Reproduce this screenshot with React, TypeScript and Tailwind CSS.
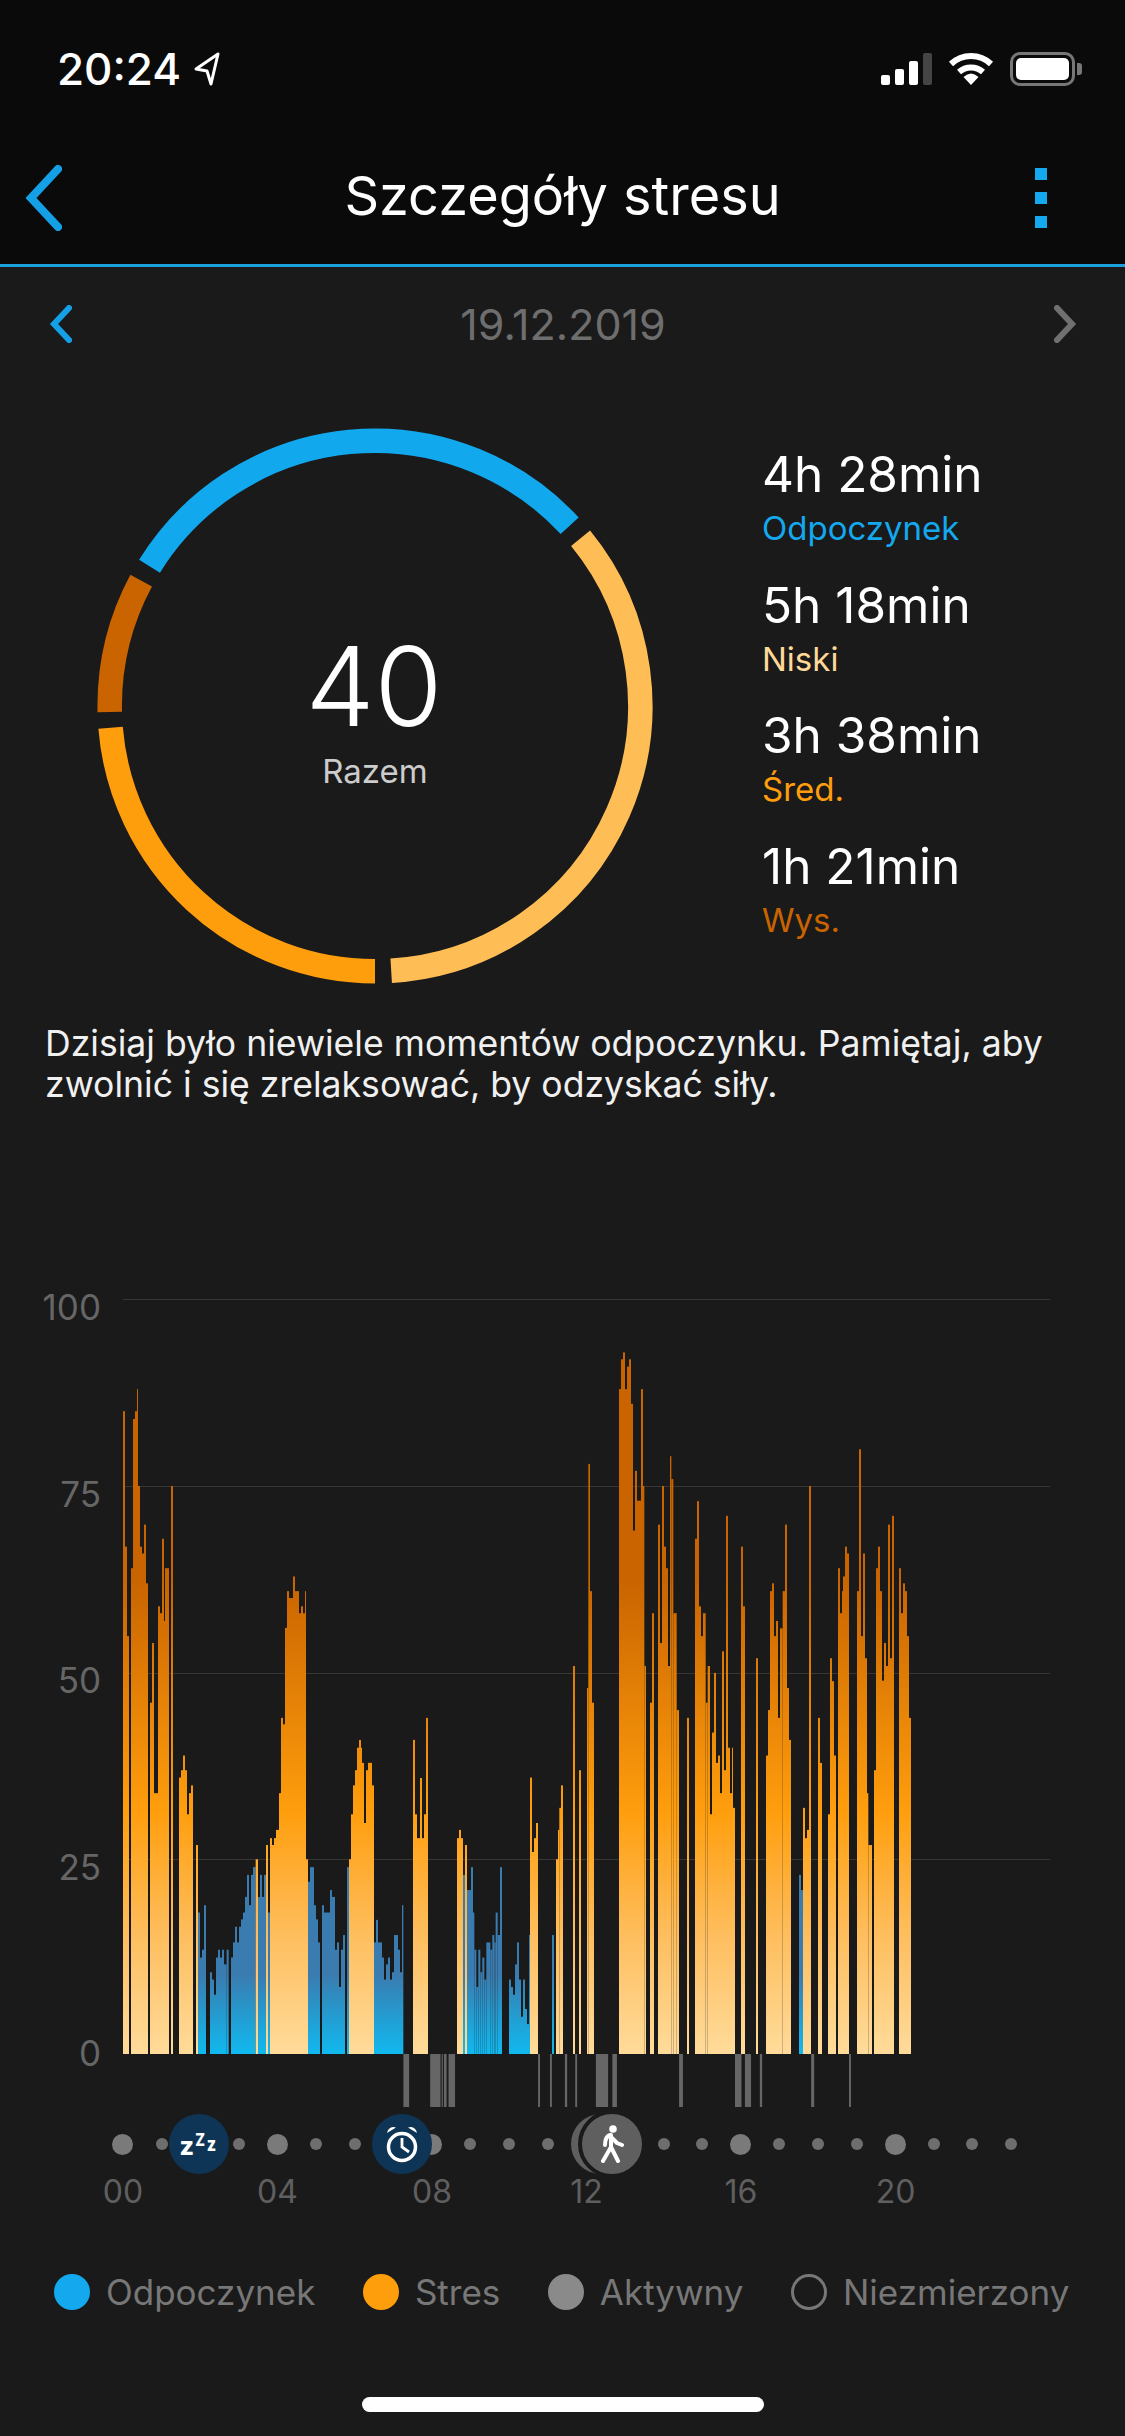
import React from "react";

const font = { fontFamily: '"Inter", "Liberation Sans", sans-serif' };

// Bars are transcribed as [end x, top y] in a 3x / 2.178x sampling of the picture.
// top 0 = gap; negative top = rest (blue).
const left: [number, number][] = [
  [69,0],[75,155],[81,450],[87,645],[93,0],[99,497],[105,172],[111,155],[114,107],[120,318],[126,450],[132,465],[138,402],[144,530],[150,0],
  [156,790],[162,660],[174,987],[180,580],[186,595],[192,433],[195,612],[207,497],[213,0],[219,318],[237,0],
  [243,953],[249,937],[255,905],[261,937],[267,1033],[273,987],[279,970],[288,0],[294,1100],
  [300,-1247],[306,-1345],[312,-1328],[318,-1231],[330,0],[336,-1377],[342,-1393],[348,-1426],[354,-1345],[360,-1328],[366,-1345],[372,-1328],[380,-1360],[386,-1328],[393,0],
  [399,-1345],[405,-1312],[411,-1278],[417,-1312],[423,-1278],[429,-1262],[435,-1247],[441,-1213],[447,-1165],[453,-1231],[459,-1165],[467,-1148],[474,1131],[480,-1213],[486,-1165],[492,-1213],[498,-1165],[504,1100],[510,-1247],
  [516,1085],[522,1100],[528,1085],[537,1067],[543,987],[549,823],[555,837],[561,627],[567,547],[579,562],[585,515],[597,547],[603,595],[609,580],[615,595],[618,547],[624,1131],
  [630,-1180],[642,-1148],[648,-1231],[654,-1262],[660,-1312],[666,0],[672,-1231],[690,-1247],[696,-1198],[705,-1213],[711,-1328],[717,-1312],[723,-1409],[729,-1328],[735,-1296],[741,0],[747,-1148],
  [753,1131],[759,1033],[765,970],[771,937],[777,888],[783,871],[786,888],[792,921],[798,1052],[804,937],[816,921],[822,970],
  [828,-1312],[834,-1263],[846,-1312],[852,-1345],[858,-1393],[864,-1360],[870,-1345],[876,-1393],[882,-1377],[894,-1296],[900,-1328],[906,-1377],[910,-1231],[939,0],
  [945,871],[951,1033],[960,1085],[966,954],[972,1085],[978,1033],[984,823],[1071,0],
  [1077,1085],[1083,1067],[1089,1085],[1095,-1165],[1101,1100],[1113,-1198],[1119,-1148],[1123,-1247],[1129,-1328],[1135,-1409],[1141,-1328],[1147,-1377],[1153,-1345],[1159,-1393],[1171,-1312],[1177,-1328],[1183,-1296],[1187,-1312],[1193,-1247],[1200,-1296],
];
const right: [number, number][] = [
  [0,0],[6,-1148],[27,0],[33,-1393],[39,-1409],[45,-1426],[51,-1360],[57,-1312],[63,-1393],[69,-1474],[75,-1393],[81,-1457],[87,-1490],[90,-1296],
  [96,953],[102,1115],[108,1085],[114,1052],[156,0],[162,-1296],[168,0],[174,1131],[178,1067],[183,1019],[189,970],[219,0],[225,710],[237,0],[243,937],[261,0],
  [265,758],[270,270],[276,547],[282,790],[357,0],
  [363,107],[369,42],[375,27],[381,107],[387,58],[393,42],[399,139],[405,415],[411,285],[423,350],[429,107],[433,318],[438,710],[450,0],
  [456,790],[462,595],[474,0],[480,402],[486,660],[492,318],[498,450],[504,497],[510,710],[514,253],[520,303],[530,595],[537,806],[561,0],[567,823],[585,0],
  [591,433],[597,351],[603,580],[609,645],[617,595],[623,790],[630,710],[636,1033],[642,855],[648,725],[654,921],[660,905],[666,987],[672,678],[678,937],[684,383],[690,888],[696,987],[699,888],[705,1019],[723,0],
  [729,450],[735,580],[768,0],[774,693],[798,0],
  [804,905],[810,806],[816,547],[822,530],[828,645],[834,612],[840,823],[848,628],[855,547],[861,402],[867,758],[873,871],[897,0],
  [903,-1165],[909,-1198],[915,1019],[921,1085],[927,1067],[933,318],[954,0],[960,823],[966,921],[984,0],
  [990,1033],[996,693],[1002,743],[1008,905],[1014,0],[1020,497],[1026,595],[1029,547],[1035,515],[1041,450],[1047,465],[1071,0],
  [1077,547],[1083,238],[1089,645],[1095,465],[1101,693],[1105,987],[1116,1100],[1122,0],
  [1128,937],[1134,497],[1140,450],[1146,547],[1152,742],[1158,660],[1164,710],[1170,402],[1176,693],[1182,383],[1197,0],
  [1203,497],[1209,595],[1215,530],[1221,547],[1227,645],[1233,823],
];

const BASE = 2054;
function toRects(data: [number, number][], origin: number) {
  const out: { x: number; w: number; y: number; blue: boolean }[] = [];
  let prev = data[0][0];
  for (const [end, top] of data) {
    if (top !== 0 && end > prev) {
      out.push({ x: origin + prev / 3, w: (end - prev) / 3, y: 1340 + Math.abs(top) / 2.178, blue: top < 0 });
    }
    prev = end;
  }
  return out;
}
const bars = [...toRects(left, 100), ...toRects(right, 500)];

const act5 = [[845,860],[915,942],[945,948],[951,958],[963,980],[1197,1202],[1228,1233],[1267,1273],[1294,1299],[1348,1380],[1391,1403]].map(([a,b]) => [80 + a / 2.613, 80 + b / 2.613]);
const act6 = [[468,478],[614,631],[640,656],[679,685],[813,821],[912,917]].map(([a,b]) => [500 + a / 2.613, 500 + b / 2.613]);
const activity = [...act5, ...act6];

function arc(a0: number, a1: number) {
  const r = 265.3, cx = 278, cy = 278;
  const p = (a: number) => {
    const t = (a * Math.PI) / 180;
    return `${cx + r * Math.sin(t)} ${cy - r * Math.cos(t)}`;
  };
  return `M${p(a0)} A${r} ${r} 0 ${a1 - a0 > 180 ? 1 : 0} 1 ${p(a1)}`;
}

const stats = [
  ["4h 28min", "Odpoczynek", "text-[#14a8ee]"],
  ["5h 18min", "Niski", "text-[#ffd998]"],
  ["3h 38min", "Śred.", "text-[#ff9e0d]"],
  ["1h 21min", "Wys.", "text-[#c96400]"],
];

function Chevron({ dir, className, w, h, sw }: { dir: "l" | "r"; className: string; w: number; h: number; sw: number }) {
  const pts = dir === "l" ? `${w - sw / 2},${sw / 2} ${sw},${h / 2} ${w - sw / 2},${h - sw / 2}` : `${sw / 2},${sw / 2} ${w - sw},${h / 2} ${sw / 2},${h - sw / 2}`;
  return (
    <svg width={w} height={h} viewBox={`0 0 ${w} ${h}`} className={className}>
      <polyline points={pts} fill="none" stroke="currentColor" strokeWidth={sw} strokeLinecap="round" strokeLinejoin="miter" />
    </svg>
  );
}

function Dot({ big }: { big: boolean }) {
  return <div className={big ? "w-[21px] h-[21px] rounded-full bg-[#7a7a7a]" : "w-[12px] h-[12px] rounded-full bg-[#6e6e6e]"} />;
}

export default function App() {
  return (
    <div className="w-[1125px] min-h-[2436px] bg-[#1a1a1a] text-white overflow-hidden" style={font}>
      <header className="bg-[#0a0a0a] h-[267px] border-b-[3px] border-[#1ba1dd]">
        <div className="h-[138px] flex items-center justify-between pl-[57px] pr-[43px]">
          <div className="flex items-center gap-[10px]">
            <span className="text-[44px] font-medium leading-none">20:24</span>
            <svg width="30" height="34" viewBox="0 0 30 34">
              <path d="M27 2 L5 17 L16 19 L20 32 Z" fill="none" stroke="white" strokeWidth="3" strokeLinejoin="round" />
            </svg>
          </div>
          <div className="flex items-center">
            <div className="flex items-end gap-[5px] h-[32px] mr-[16px]">
              <div className="w-[9px] h-[10px] rounded-[2px] bg-white" />
              <div className="w-[9px] h-[16px] rounded-[2px] bg-white" />
              <div className="w-[9px] h-[24px] rounded-[2px] bg-white" />
              <div className="w-[9px] h-[32px] rounded-[2px] bg-[#444444]" />
            </div>
            <svg width="46" height="34" viewBox="0 0 46 34" className="mr-[16px]">
              <path d="M3 12 A29 29 0 0 1 43 12" fill="none" stroke="white" strokeWidth="6" />
              <path d="M11 20 A18 18 0 0 1 35 20" fill="none" stroke="white" strokeWidth="6" />
              <path d="M15.5 25 Q23 18 30.5 25 L23 33 Z" fill="white" />
            </svg>
            <div className="flex items-center gap-[2px]">
              <div className="w-[65px] h-[34px] rounded-[10px] border-[3px] border-[#777777] p-[3px]">
                <div className="w-full h-full rounded-[5px] bg-white" />
              </div>
              <div className="w-[5px] h-[12px] rounded-r-[3px] bg-[#777777]" />
            </div>
          </div>
        </div>
        <div className="h-[120px] relative flex items-center justify-center pb-[5px]">
          <span className="text-[54px] leading-none">Szczegóły stresu</span>
          <Chevron dir="l" w={39} h={66} sw={8} className="absolute left-[23px] top-[27px] text-[#14a0e6]" />
          <div className="absolute left-[1035px] top-[30px] flex flex-col gap-[12px]">
            <div className="w-[12px] h-[12px] bg-[#14a8ee]" />
            <div className="w-[12px] h-[12px] bg-[#14a8ee]" />
            <div className="w-[12px] h-[12px] bg-[#14a8ee]" />
          </div>
        </div>
      </header>

      <div className="h-[114px] flex items-center justify-between pl-[48px] pr-[47px]">
        <Chevron dir="l" w={24} h={38} sw={6} className="text-[#14a0e6]" />
        <span className="text-[43px] leading-none text-[#6e6e6e]">19.12.2019</span>
        <Chevron dir="r" w={24} h={38} sw={6} className="text-[#707070]" />
      </div>

      <section className="flex mt-[47px] pl-[97px]">
        <div className="relative w-[556px] h-[556px] flex flex-col items-center justify-center">
          <svg width="556" height="556" viewBox="0 0 556 556" className="absolute inset-0">
            <g fill="none" strokeWidth="24.5">
              <path d={arc(-58.2, 47.2)} stroke="#12a8ee" />
              <path d={arc(50.8, 176.5)} stroke="#ffbe55" />
              <path d={arc(180, 265.3)} stroke="#ff9e0d" />
              <path d={arc(268.7, 298.2)} stroke="#c96400" />
            </g>
          </svg>
          <span className="text-[110px] font-light leading-none mt-[6px] ml-[-2px]">40</span>
          <span className="text-[33px] leading-none mt-[14px] text-[#cccccc]">Razem</span>
        </div>
        <div className="ml-[109px] pt-[20px] flex flex-col">
          {stats.map(([t, l, c]) => (
            <div key={l} className="h-[130.6px]">
              <div className="text-[49.5px] leading-[52px]">{t}</div>
              <div className={`text-[33px] leading-[36px] mt-[10px] ${c}`}>{l}</div>
            </div>
          ))}
        </div>
      </section>

      <p className="mt-[39px] pl-[45px] text-[35.6px] leading-[41px] text-[#f0f0f0] whitespace-nowrap">
        Dzisiaj było niewiele momentów odpoczynku. Pamiętaj, aby
        <br />
        zwolnić i się zrelaksować, by odzyskać siły.
      </p>

      <section className="mt-[182px] flex">
        <div className="w-[101px] shrink-0 flex flex-col items-end gap-[146.6px] text-[35px] leading-[40px] text-[#666666]">
          <span>100</span>
          <span>75</span>
          <span>50</span>
          <span>25</span>
          <span>0</span>
        </div>
        <svg width="930" height="820" viewBox="123 1287 930 820" className="ml-[22px] shrink-0 block">
          <defs>
            <linearGradient id="o" gradientUnits="userSpaceOnUse" x1="0" y1="1580" x2="0" y2="2054">
              <stop offset="0" stopColor="#c96400" />
              <stop offset="0.49" stopColor="#ff9e0d" />
              <stop offset="0.75" stopColor="#febe5e" />
              <stop offset="1" stopColor="#ffdb9a" />
            </linearGradient>
            <linearGradient id="b" gradientUnits="userSpaceOnUse" x1="0" y1="1975" x2="0" y2="2054">
              <stop offset="0" stopColor="#3a7cb0" />
              <stop offset="1" stopColor="#10b9ef" />
            </linearGradient>
          </defs>
          {[1299, 1486, 1673, 1859].map((y) => (
            <rect key={y} x="123" y={y} width="927" height="1" fill="#363636" />
          ))}
          {bars.map((b, i) => (
            <rect key={i} x={b.x} y={b.y} width={b.w} height={BASE - b.y} fill={b.blue ? "url(#b)" : "url(#o)"} />
          ))}
          {activity.map(([a, c], i) => (
            <rect key={i} x={a} y={BASE} width={c - a} height={53} fill="#666666" />
          ))}
        </svg>
      </section>

      <div className="relative h-[60px] mt-[7px] pl-[103.7px] flex items-center">
        {Array.from({ length: 24 }).map((_, i) => (
          <div key={i} className="w-[38.62px] flex items-center justify-center">
            <Dot big={i % 4 === 0} />
          </div>
        ))}
        <div className="absolute left-[168.5px] top-0 w-[60px] h-[60px] rounded-full bg-[#0e3556] flex items-center justify-center font-extrabold leading-none">
          <span className="text-[25px] translate-y-[2px]">z</span>
          <span className="text-[18px] translate-y-[-4px] scale-x-[0.8]">Z</span>
          <span className="text-[19px] scale-x-[0.85]">z</span>
        </div>
        <div className="absolute left-[371.5px] top-0 w-[60px] h-[60px] rounded-full bg-[#0e3556] flex items-center justify-center">
          <svg width="34" height="38" viewBox="0 0 34 38">
            <circle cx="17" cy="22" r="13.5" fill="none" stroke="white" strokeWidth="3.5" />
            <path d="M17 13 V22 L24 27" fill="none" stroke="white" strokeWidth="2.8" />
            <path d="M2 8 A6.5 6.5 0 0 1 11 2.5 Z" fill="white" />
            <path d="M32 8 A6.5 6.5 0 0 0 23 2.5 Z" fill="white" />
          </svg>
        </div>
        <div className="absolute left-[571px] top-0 w-[60px] h-[60px] rounded-full bg-[#5f5f5f]" />
        <div className="absolute left-[578px] top-[-4px] w-[68px] h-[68px] rounded-full bg-[#5f5f5f] border-[4px] border-[#1a1a1a] flex items-center justify-center">
          <svg width="24" height="38" viewBox="0 0 24 38">
            <circle cx="13" cy="4" r="3.8" fill="white" />
            <path d="M10 10 C7 11 5 14 5 20 M11 10 L11 22 L18 36 M11 22 L3 36 M12 13 L17 18 L22 20" fill="none" stroke="white" strokeWidth="4" strokeLinecap="round" strokeLinejoin="round" />
          </svg>
        </div>
      </div>

      <div className="flex pl-[45.75px] h-[36px] items-center text-[32px] leading-none text-[#5f5f5f]">
        {["00", "04", "08", "12", "16", "20"].map((h) => (
          <div key={h} className="w-[154.5px] text-center">{h}</div>
        ))}
      </div>

      <div className="mt-[62px] pl-[54px] h-[40px] flex items-center gap-[47.5px] text-[35px] leading-none text-[#777777]">
        <div className="flex items-center gap-[16px]">
          <div className="w-[36px] h-[36px] rounded-full bg-[#14a8ee]" />
          <span>Odpoczynek</span>
        </div>
        <div className="flex items-center gap-[16px]">
          <div className="w-[36px] h-[36px] rounded-full bg-[#ff9e0d]" />
          <span>Stres</span>
        </div>
        <div className="flex items-center gap-[16px]">
          <div className="w-[36px] h-[36px] rounded-full bg-[#8a8a8a]" />
          <span>Aktywny</span>
        </div>
        <div className="flex items-center gap-[16px]">
          <div className="w-[36px] h-[36px] rounded-full border-[3px] border-[#777777]" />
          <span>Niezmierzony</span>
        </div>
      </div>

      <div className="mt-[85px] mx-auto w-[402px] h-[15px] rounded-full bg-white" />
    </div>
  );
}
